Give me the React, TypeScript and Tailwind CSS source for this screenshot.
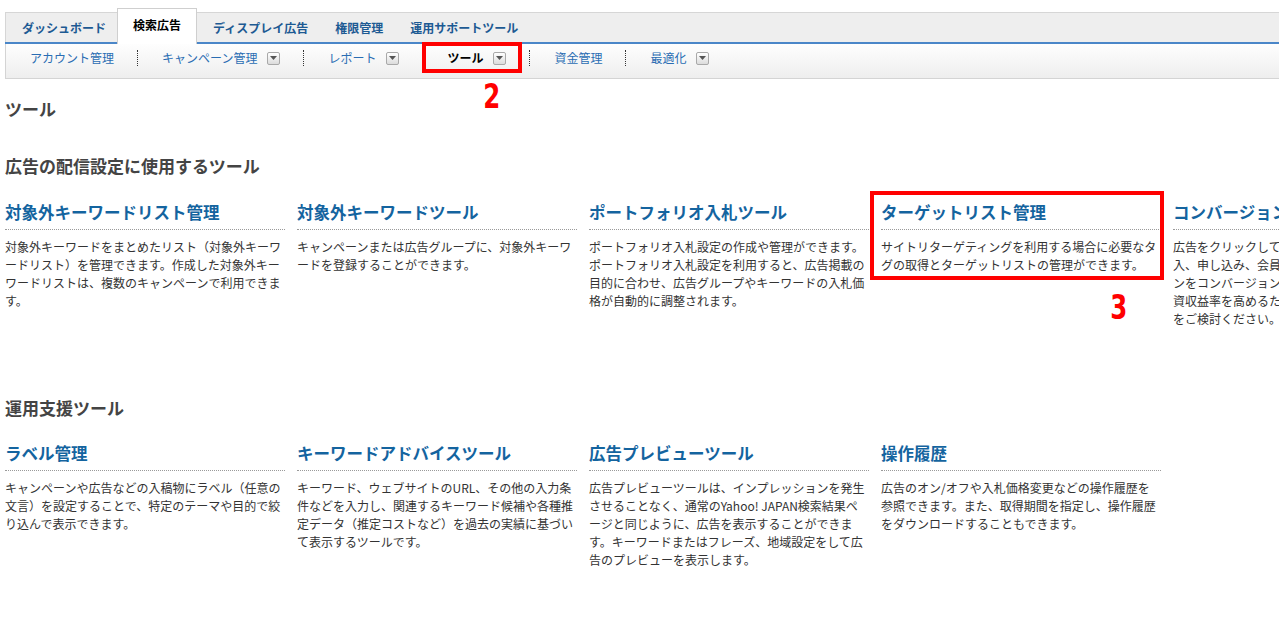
const tabs = [
	{ label: "ダッシュボード" },
	{ label: "検索広告", active: true },
	{ label: "ディスプレイ広告" },
	{ label: "権限管理" },
	{ label: "運用サポートツール" },
];

const subNav = [
	{ label: "アカウント管理" },
	{ label: "キャンペーン管理", menu: true },
	{ label: "レポート", menu: true },
	{ label: "ツール", menu: true, current: true },
	{ label: "資金管理" },
	{ label: "最適化", menu: true },
];

interface Tool {
	title: string;
	lines: string[];
}

const deliveryTools: Tool[] = [
	{
		title: "対象外キーワードリスト管理",
		lines: [
			"対象外キーワードをまとめたリスト（対象外キーワ",
			"ードリスト）を管理できます。作成した対象外キー",
			"ワードリストは、複数のキャンペーンで利用できま",
			"す。",
		],
	},
	{
		title: "対象外キーワードツール",
		lines: [
			"キャンペーンまたは広告グループに、対象外キーワ",
			"ードを登録することができます。",
		],
	},
	{
		title: "ポートフォリオ入札ツール",
		lines: [
			"ポートフォリオ入札設定の作成や管理ができます。",
			"ポートフォリオ入札設定を利用すると、広告掲載の",
			"目的に合わせ、広告グループやキーワードの入札価",
			"格が自動的に調整されます。",
		],
	},
	{
		title: "ターゲットリスト管理",
		lines: [
			"サイトリターゲティングを利用する場合に必要なタ",
			"グの取得とターゲットリストの管理ができます。",
		],
	},
	{
		title: "コンバージョン測定",
		lines: [
			"広告をクリックしてからのユーザーの商品の購",
			"入、申し込み、会員登録などのユーザーのアクショ",
			"ンをコンバージョンとして測定できます。広告の投",
			"資収益率を高めるために、コンバージョン測定",
			"をご検討ください。",
		],
	},
];

const supportTools: Tool[] = [
	{
		title: "ラベル管理",
		lines: [
			"キャンペーンや広告などの入稿物にラベル（任意の",
			"文言）を設定することで、特定のテーマや目的で絞",
			"り込んで表示できます。",
		],
	},
	{
		title: "キーワードアドバイスツール",
		lines: [
			"キーワード、ウェブサイトのURL、その他の入力条",
			"件などを入力し、関連するキーワード候補や各種推",
			"定データ（推定コストなど）を過去の実績に基づい",
			"て表示するツールです。",
		],
	},
	{
		title: "広告プレビューツール",
		lines: [
			"広告プレビューツールは、インプレッションを発生",
			"させることなく、通常のYahoo! JAPAN検索結果ペ",
			"ージと同じように、広告を表示することができま",
			"す。キーワードまたはフレーズ、地域設定をして広",
			"告のプレビューを表示します。",
		],
	},
	{
		title: "操作履歴",
		lines: [
			"広告のオン/オフや入札価格変更などの操作履歴を",
			"参照できます。また、取得期間を指定し、操作履歴",
			"をダウンロードすることもできます。",
		],
	},
];

const MenuButton = () => (
	<span className="ml-[10px] flex h-[13px] w-[13px] items-center justify-center rounded-[2px] border border-[#a9a9a9] bg-linear-to-b from-white to-[#dcdcdc]">
		<svg width="7" height="4" viewBox="0 0 7 4">
			<path d="M0 0h7L3.5 4z" fill="#555" />
		</svg>
	</span>
);

const Marker = ({ n, className }: { n: string; className: string }) => (
	<span
		className={`absolute scale-x-[0.8] font-['DejaVu_Sans_Condensed','DejaVu_Sans',sans-serif] text-[34px] font-bold leading-none text-[#ff0000] ${className}`}
	>
		{n}
	</span>
);

const ToolCard = ({ tool, highlight }: { tool: Tool; highlight?: boolean }) => (
	<div className="relative w-[280px] shrink-0">
		<h4 className="border-b border-dotted border-[#9a9a9a] pb-[5px] text-[16.5px] font-bold leading-6 text-[#14649f]">
			{tool.title}
		</h4>
		<p className="whitespace-nowrap pt-2 text-xs leading-[18px] text-[#333]">
			{tool.lines.map((line, i) => (
				<span key={i} className="block">
					{line}
				</span>
			))}
		</p>
		{highlight && (
			<>
				<div className="absolute left-[-11px] top-[-9px] h-[89px] w-[294px] border-4 border-[#ff0000]" />
				<Marker n="3" className="left-[227px] top-[90px]" />
			</>
		)}
	</div>
);

export default function App() {
	return (
		<div className="h-[623px] w-full overflow-hidden bg-white font-['Noto_Sans_CJK_JP','Noto_Sans',sans-serif]">
			{/* top navigation */}
			<div className="ml-[5px] pt-3">
				<div className="flex h-[30px] border-l border-t border-[#d6d6d6] bg-[#eeeeee]">
					{tabs.map((tab) =>
						tab.active ? (
							<div
								key={tab.label}
								className="relative z-10 -mt-[5px] flex h-[36px] items-center self-start border border-b-0 border-[#cfcfcf] bg-white px-[15px] pb-[4px] text-xs font-bold text-black"
							>
								{tab.label}
							</div>
						) : (
							<div
								key={tab.label}
								className="flex items-center pl-4 pr-[11px] text-xs font-bold text-[#1d5a93]"
							>
								{tab.label}
							</div>
						),
					)}
				</div>
				<div className="h-[2px] bg-[#4a86c8]" />
				<div className="flex h-[35px] items-center border-b border-l border-[#d4d4d4] bg-linear-to-b from-[#fefefe] to-[#eeeeee] pb-[6px]">
					{subNav.map((item, i) => (
						<div key={item.label} className="flex items-center">
							{i > 0 && (
								<span className="h-[16px] border-l border-dotted border-[#333]" />
							)}
							<div className="relative flex items-center pl-6 pr-[23px]">
								<span
									className={`text-xs leading-[18px] ${item.current ? "font-bold text-black" : "text-[#2a6db3]"}`}
								>
									{item.label}
								</span>
								{item.menu && <MenuButton />}
								{item.current && (
									<>
										<div className="absolute left-[-1px] top-[-7px] h-[31px] w-[100px] border-4 border-[#ff0000]" />
										<Marker n="2" className="left-[58px] top-[30px]" />
									</>
								)}
							</div>
						</div>
					))}
				</div>
			</div>

			{/* content */}
			<div className="px-[5px]">
				<h2 className="mt-[18px] text-[17px] font-bold leading-6 text-[#444]">
					ツール
				</h2>

				<h3 className="mt-[33px] text-[17px] font-bold leading-6 text-[#444]">
					広告の配信設定に使用するツール
				</h3>
				<div className="mt-[22px] flex gap-3">
					{deliveryTools.map((tool, i) => (
						<ToolCard key={tool.title} tool={tool} highlight={i === 3} />
					))}
				</div>

				<h3 className="mt-[68px] text-[17px] font-bold leading-6 text-[#444]">
					運用支援ツール
				</h3>
				<div className="mt-[21px] flex gap-3">
					{supportTools.map((tool) => (
						<ToolCard key={tool.title} tool={tool} />
					))}
				</div>
			</div>
		</div>
	);
}
